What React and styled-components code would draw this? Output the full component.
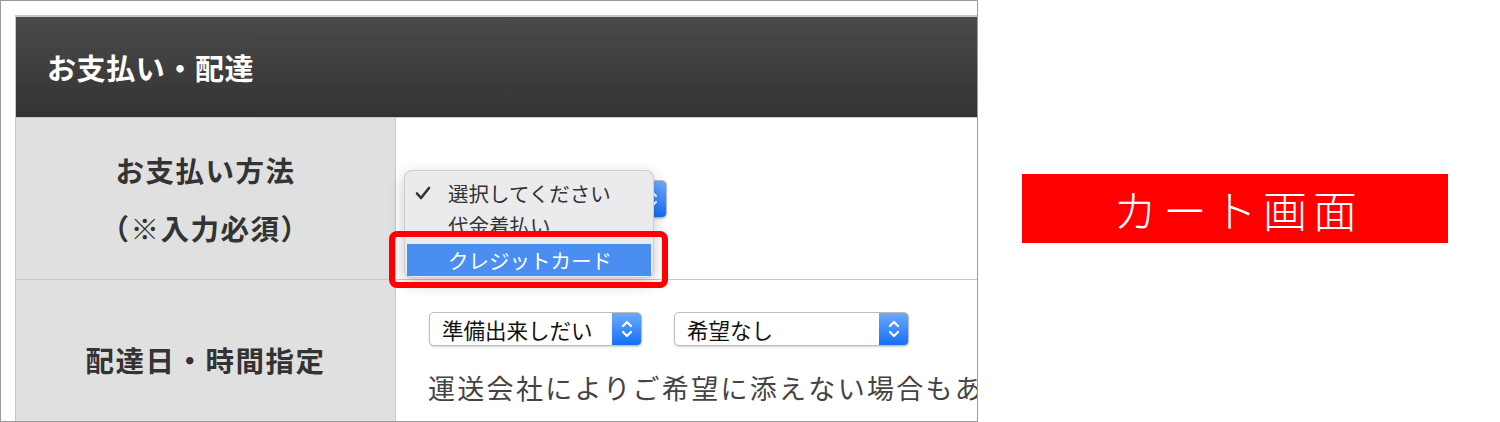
import React from 'react';
import styled, {createGlobalStyle} from 'styled-components';

const GlobalStyle = createGlobalStyle`
body{
  margin:0;
  background:#fff;
  font-family:"Noto Sans CJK JP","Noto Sans",sans-serif;
}
`

const Page = styled.div`
display:flex;
width:1500px;
height:422px;
`
const Frame = styled.div`
width:978px;
height:422px;
box-sizing:border-box;
border:1px solid #9b9b9b;
padding:14px 0 0 14px;
overflow:hidden;
flex-shrink:0;
`
const Table = styled.div`
width:1100px;
border-left:1px solid #c8c8c8;
border-top:1px solid #c8c8c8;
`
const Header = styled.div`
height:100px;
border-top:1px solid #c8c8c8;
border-bottom:1px solid #c8c8c8;
background:linear-gradient(#4a4a4a,#333);
display:flex;
align-items:center;
padding-left:31px;
color:#fff;
font-size:29px;
font-weight:700;
letter-spacing:0.6px;
`
const Row = styled.div`
display:grid;
grid-template-columns:380px 1fr;
height:${p=>p.h}px;
border-bottom:1px solid #c8c8c8;
`
const Label = styled.div`
background:#e0e0e0;
border-right:1px solid #c8c8c8;
display:flex;
flex-direction:column;
align-items:center;
justify-content:center;
color:#333;
font-size:28.5px;
font-weight:700;
line-height:58px;
letter-spacing:1.5px;
`
const Value = styled.div`
position:relative;
display:flex;
flex-direction:column;
justify-content:${p=>p.center ? 'center' : 'flex-start'};
padding:${p=>p.center ? '0 0 0 33px' : '32px 0 0 32px'};
`
const Selects = styled.div`
display:flex;
gap:32px;
padding-left:1px;
`
const Select = styled.div`
display:flex;
width:${p=>p.w}px;
height:${p=>p.h || 34}px;
box-sizing:border-box;
border:1px solid #bdbdbd;
border-radius:5px;
background:#fff;
box-shadow:0 1px 2px rgba(0,0,0,.18);
overflow:hidden;
`
const SelectText = styled.div`
flex:1;
display:flex;
align-items:center;
padding-left:12px;
font-size:21.5px;
color:#111;
`
const SelectButton = styled.div`
width:29px;
display:flex;
align-items:center;
justify-content:center;
background:linear-gradient(#6ca9ff,#1570f6);
`
const Note = styled.div`
margin-top:22px;
font-size:27px;
letter-spacing:2.3px;
color:#444;
white-space:nowrap;
line-height:40px;
`
const Popup = styled.div`
position:absolute;
left:8px;
top:52px;
width:250px;
height:108px;
box-sizing:border-box;
padding:6px 2px 4px;
background:#ebebee;
border:1px solid rgba(0,0,0,.12);
border-radius:8px;
box-shadow:0 5px 16px rgba(0,0,0,.22);
`
const Item = styled.div`
position:relative;
height:32px;
display:flex;
align-items:center;
padding-left:41px;
font-size:20.5px;
line-height:1;
color:${p=>p.active ? '#fff' : '#333'};
background:${p=>p.active ? '#4b8ef1' : 'transparent'};
margin-top:${p=>p.active ? '3px' : '0'};
`
const Check = styled.svg`
position:absolute;
left:8px;
top:9px;
`
const Highlight = styled.div`
position:absolute;
left:-7px;
top:113px;
width:279px;
height:57px;
box-sizing:border-box;
border:6px solid #ff0000;
border-radius:8px;
`
const Side = styled.div`
flex:1;
padding:174px 0 0 44px;
`
const Badge = styled.div`
width:426px;
height:69px;
background:#ff0000;
display:flex;
align-items:center;
justify-content:center;
padding-left:6px;
box-sizing:border-box;
color:#fff;
font-size:44px;
font-weight:300;
letter-spacing:6px;
`

function Arrows(){
  return (
    <svg width="14" height="20" viewBox="0 0 14 20" fill="none" stroke="#fff" strokeWidth="2.2" strokeLinecap="round" strokeLinejoin="round">
      <polyline points="3,7 7,3 11,7"/>
      <polyline points="3,13 7,17 11,13"/>
    </svg>
  )
}

function DropSelect({w,h,label}){
  return (
    <Select w={w} h={h}>
      <SelectText>{label}</SelectText>
      <SelectButton><Arrows/></SelectButton>
    </Select>
  )
}

export default function App(){
  return (
    <Page>
      <GlobalStyle/>
      <Frame>
        <Table>
          <Header>お支払い・配達</Header>
          <Row h={161}>
            <Label>
              <div>お支払い方法</div>
              <div>（※入力必須）</div>
            </Label>
            <Value center>
              {/* select under the open menu, only its button shows */}
              <DropSelect w={238} h={38} label=""/>
              <Popup>
                <Item>
                  <Check width="16" height="14" viewBox="0 0 16 14" fill="none" stroke="#333" strokeWidth="2.6" strokeLinecap="round" strokeLinejoin="round">
                    <polyline points="2,7.5 6,12 14,2"/>
                  </Check>
                  選択してください
                </Item>
                <Item>代金着払い</Item>
                <Item active>クレジットカード</Item>
              </Popup>
              <Highlight/>
            </Value>
          </Row>
          <Row h={160}>
            <Label>配達日・時間指定</Label>
            <Value>
              <Selects>
                <DropSelect w={213} label="準備出来しだい"/>
                <DropSelect w={235} label="希望なし"/>
              </Selects>
              <Note>運送会社によりご希望に添えない場合もあります。</Note>
            </Value>
          </Row>
        </Table>
      </Frame>
      <Side>
        <Badge>カート画面</Badge>
      </Side>
    </Page>
  )
}
